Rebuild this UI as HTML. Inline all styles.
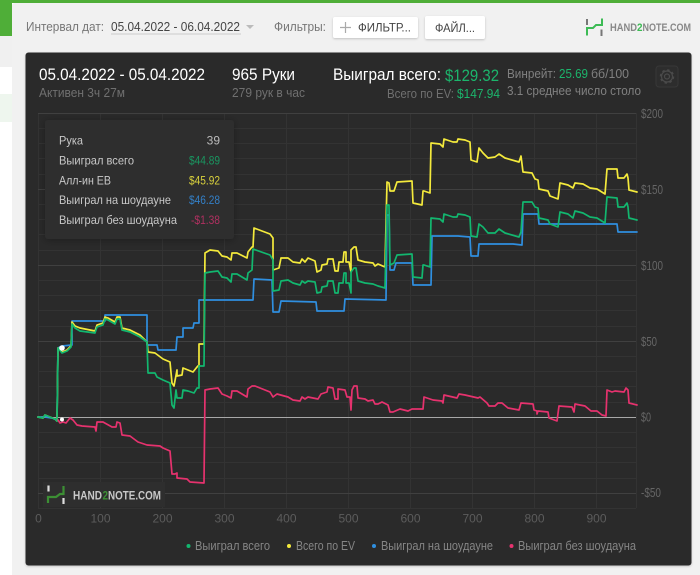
<!DOCTYPE html>
<html><head><meta charset="utf-8"><style>
html,body{margin:0;padding:0;width:700px;height:575px;overflow:hidden;background:#fff}
svg{display:block;font-family:"Liberation Sans","Noto Sans CJK SC",sans-serif}
</style></head><body>
<svg width="700" height="575" viewBox="0 0 700 575" xmlns="http://www.w3.org/2000/svg">
<defs>
<filter id="s" x="-20%" y="-20%" width="140%" height="140%"><feDropShadow dx="0" dy="1" stdDeviation="1" flood-color="#000" flood-opacity=".2"/></filter>
<filter id="t" x="-20%" y="-20%" width="140%" height="140%"><feDropShadow dx="0" dy="1" stdDeviation="4" flood-color="#000" flood-opacity=".3"/></filter>
</defs>
<rect width="700" height="575" fill="#fff"/>
<rect width="700" height="3" fill="#4fae38"/>
<rect width="12" height="36" fill="#4fae38"/>
<rect y="36" width="12" height="31" fill="#f0f0f0"/>
<rect y="94" width="12" height="28" fill="#eef6ee"/>
<rect x="12" y="3" width="700" height="580" rx="3" fill="#f1f1f1"/>

<text x="26" y="31" font-size="13" fill="#777" textLength="78" lengthAdjust="spacingAndGlyphs">Интервал дат:</text>
<text x="111" y="31" font-size="13" fill="#444" textLength="129" lengthAdjust="spacingAndGlyphs">05.04.2022 - 06.04.2022</text>
<rect x="111" y="33.500" width="130" height="1" fill="#ccc"/>
<path d="M246 25h8l-4 4z" fill="#bbb"/>
<text x="274" y="31" font-size="13" fill="#777" textLength="52" lengthAdjust="spacingAndGlyphs">Фильтры:</text>
<rect x="333" y="17" width="85" height="21" rx="2" fill="#fff" filter="url(#s)"/>
<path d="M345.500 22v11M340 27.500h11" stroke="#aaa" stroke-width="1.200" fill="none"/>
<text x="358" y="31.500" font-size="12" fill="#444" textLength="53" lengthAdjust="spacingAndGlyphs">ФИЛЬТР...</text>
<rect x="425" y="16" width="60" height="23" rx="2" fill="#fff" filter="url(#s)"/>
<text x="435" y="32" font-size="12" fill="#444" textLength="40" lengthAdjust="spacingAndGlyphs">ФАЙЛ...</text>

<path d="M587 19v6M601.500 29.500v6.500" stroke="#777" stroke-width="2" fill="none"/>
<path d="M587 35.500v-7.500h6l3-3h6v-6.500" stroke="#3dbb55" stroke-width="2" fill="none"/>
<g font-size="11" font-weight="bold" fill="#888">
<text x="610" y="31" textLength="27" lengthAdjust="spacingAndGlyphs">HAND</text>
<text x="637" y="31" fill="#3dbb55" textLength="5.500" lengthAdjust="spacingAndGlyphs">2</text>
<text x="642.500" y="31" textLength="48.500" lengthAdjust="spacingAndGlyphs">NOTE.COM</text>
</g>

<rect x="25.500" y="52.500" width="666" height="513" rx="3" fill="#2a2a2a" filter="url(#s)"/>

<text x="39" y="80" font-size="17" fill="#fff" textLength="166" lengthAdjust="spacingAndGlyphs">05.04.2022 - 05.04.2022</text>
<text x="39" y="97" font-size="13" fill="#707070" textLength="86" lengthAdjust="spacingAndGlyphs">Активен 3ч 27м</text>
<text x="232" y="80" font-size="17" fill="#fff" textLength="63" lengthAdjust="spacingAndGlyphs">965 Руки</text>
<text x="232" y="97" font-size="13" fill="#707070" textLength="73" lengthAdjust="spacingAndGlyphs">279 рук в час</text>
<text x="333" y="80" font-size="17" fill="#fff" textLength="108" lengthAdjust="spacingAndGlyphs">Выиграл всего:</text>
<text x="445" y="81" font-size="17" fill="#1cb56c" textLength="54" lengthAdjust="spacingAndGlyphs">$129.32</text>
<text x="387" y="98" font-size="13" fill="#707070" textLength="67" lengthAdjust="spacingAndGlyphs">Всего по EV:</text>
<text x="457" y="98" font-size="13" fill="#1cb56c" textLength="43" lengthAdjust="spacingAndGlyphs">$147.94</text>
<text x="507" y="78" font-size="13" fill="#808080" textLength="49" lengthAdjust="spacingAndGlyphs">Винрейт:</text>
<text x="559" y="78" font-size="13" fill="#1cb56c" textLength="29" lengthAdjust="spacingAndGlyphs">25.69</text>
<text x="591" y="78" font-size="13" fill="#808080" textLength="38" lengthAdjust="spacingAndGlyphs">бб/100</text>
<text x="507" y="95" font-size="13" fill="#808080" textLength="134" lengthAdjust="spacingAndGlyphs">3.1 среднее число столо</text>

<rect x="656" y="66" width="22" height="21" rx="3" fill="#2d2d2d" stroke="#383838"/>
<circle cx="667" cy="76.500" r="2.500" fill="none" stroke="#4a4a4a" stroke-width="1.200"/>
<circle cx="667" cy="76.500" r="5.500" fill="none" stroke="#4a4a4a" stroke-width="1.200"/>
<circle cx="667" cy="76.500" r="6.500" fill="none" stroke="#4a4a4a" stroke-width="1.500" stroke-dasharray="2.500 2.600"/>

<g stroke="#333" stroke-width="1" fill="none">
<path d="M38 128.500H636M38 143.500H636M38 158.500H636M38 174.500H636M38 204.500H636M38 219.500H636M38 234.500H636M38 250.500H636M38 280.500H636M38 295.500H636M38 310.500H636M38 326.500H636M38 356.500H636M38 371.500H636M38 386.500H636M38 402.500H636M38 432.500H636M38 447.500H636M38 462.500H636M38 478.500H636"/>
<path d="M38.500 113V508M100.500 113V508M162.500 113V508M224.500 113V508M286.500 113V508M348.500 113V508M410.500 113V508M472.500 113V508M534.500 113V508M596.500 113V508M636.500 113V508"/>
<path d="M38 113.500H636M38 189.500H636M38 265.500H636M38 341.500H636M38 493.500H636" stroke="#404040"/>
<path d="M38 508.500H636" stroke="#333"/>
</g>
<path d="M38 417.500H636" stroke="#a8a8a8" stroke-width="1"/>

<g font-size="13" fill="#666">
<text x="641" y="118" textLength="22" lengthAdjust="spacingAndGlyphs">$200</text>
<text x="641" y="194" textLength="22" lengthAdjust="spacingAndGlyphs">$150</text>
<text x="641" y="270" textLength="22" lengthAdjust="spacingAndGlyphs">$100</text>
<text x="641" y="346" textLength="16" lengthAdjust="spacingAndGlyphs">$50</text>
<text x="641" y="421.500" textLength="10" lengthAdjust="spacingAndGlyphs">$0</text>
<text x="641" y="497" textLength="20" lengthAdjust="spacingAndGlyphs">-$50</text>
</g>
<g font-size="12" fill="#5c5c5c" text-anchor="middle">
<text x="38.500" y="522.500">0</text><text x="100.500" y="522.500">100</text><text x="162.500" y="522.500">200</text><text x="224.500" y="522.500">300</text><text x="286.500" y="522.500">400</text><text x="348.500" y="522.500">500</text><text x="410.500" y="522.500">600</text><text x="472.500" y="522.500">700</text><text x="534.500" y="522.500">800</text><text x="596.500" y="522.500">900</text>
</g>

<g fill="none" stroke-width="1.700" stroke-linejoin="round" stroke-linecap="round">
<path stroke="#2f8fe0" d="M38 417L45 417L52 418L57 420L58 348L62 346L72 345L72 321L105 321L105 315L147 315L147 345L157 345L158 350L176 350L177 337L183 337L183 328L193 328L194 323L199 323L199 300L253 300L254 279L272 280L273 312L279 312L281 301L316 302L317 311L344 311L345 299L386 300L387 215L389 215L390 270L394 270L396 263L412 263L413 285L431 285L432 236L458 236L470 237L471 256L478 256L479 244L513 244L522 245L523 214L538 214L539 224L617 224L618 232L637 232"/>
<path stroke="#f4ea3c" d="M38 417L43 418L45 415L50 417L55 419L57 421L58 348L62 352L67 350L71 346L72 322L75 326L80 328L95 331L97 325L103 323L105 317L108 318L115 322L117 317L120 317L122 328L130 330L140 335L147 342L148 352L155 353L163 359L170 362L172 383L174 386L177 370L177 376L182 375L183 368L188 370L193 372L197 367L199 365L199 344L204 344L205 253L210 250L218 251L222 256L227 257L231 260L232 253L237 253L247 258L248 252L252 247L253 247L254 228L270 234L273 238L273 270L279 268L281 258L288 258L293 262L300 263L302 259L305 262L308 258L315 261L317 272L321 270L322 265L327 264L328 259L333 259L335 271L338 271L339 262L343 262L344 252L346 252L346 262L349 262L351 272L351 250L354 247L356 247L358 260L365 262L373 263L375 266L378 264L385 267L387 182L389 183L390 191L394 191L397 182L412 181L413 203L422 205L423 191L424 191L430 193L431 143L440 144L443 147L444 139L453 142L457 142L458 139L465 140L470 142L471 160L477 162L479 148L483 153L488 158L495 157L499 154L505 158L519 162L521 156L523 172L532 173L535 179L538 180L539 189L548 191L550 196L558 199L560 183L568 185L573 188L575 183L583 184L590 188L597 189L605 194L607 169L617 169L618 178L624 178L627 174L628 178L629 190L637 192"/>
<path stroke="#12b76f" d="M38 417L43 418L45 415L50 417L55 419L57 421L58 348L62 353L67 351L71 347L72 324L75 328L80 331L95 333L97 327L103 325L105 319L108 320L115 324L117 319L120 319L122 330L130 332L140 337L147 342L148 373L155 373L157 377L163 380L170 383L172 405L174 408L176 390L177 398L182 398L183 390L188 391L194 393L197 388L199 388L199 366L204 366L205 273L210 272L218 271L222 277L227 278L231 282L232 274L237 274L247 280L248 273L252 270L253 249L270 255L273 260L273 291L279 290L281 281L288 280L293 283L300 285L302 281L305 283L308 281L315 282L317 293L321 292L322 287L327 286L328 281L333 281L335 293L338 293L339 283L343 283L344 273L346 273L346 283L349 283L351 293L351 272L354 268L356 268L358 281L365 283L373 284L378 286L385 288L387 205L389 205L390 265L394 263L397 255L412 254L413 277L422 278L423 265L424 265L430 267L431 218L440 219L443 222L444 214L453 217L457 217L458 214L465 215L470 217L471 236L477 237L479 224L483 227L488 233L495 233L499 229L505 233L519 237L521 232L523 202L532 202L535 207L538 208L539 218L548 220L550 224L558 227L560 212L568 214L573 218L575 211L583 213L590 217L597 218L605 223L607 197L617 198L618 207L624 207L627 203L628 207L629 218L637 220"/>
<path stroke="#e6326e" d="M58 420L60 423L63 422L66 423L70 418L73 420L77 425L82 426L95 427L96 431L97 422L103 422L112 427L116 427L117 422L120 423L122 435L130 436L138 442L147 445L160 446L163 448L170 451L172 474L175 474L177 473L177 478L187 479L190 482L204 483L205 390L210 389L218 388L222 394L227 396L231 398L232 391L237 391L247 397L248 389L252 386L255 386L270 392L273 397L277 394L288 397L293 400L300 401L302 397L305 399L308 397L318 399L321 394L327 392L328 387L333 388L335 399L338 399L338 389L345 390L347 397L350 397L351 410L352 390L354 386L357 386L358 398L365 399L368 401L373 400L375 404L378 404L382 402L388 405L390 412L393 412L400 409L408 411L412 409L423 409L424 397L433 400L442 401L443 403L444 395L457 398L459 394L465 395L478 398L480 397L487 403L489 406L495 406L498 403L502 403L508 408L519 410L521 403L533 404L534 410L537 411L537 414L538 411L548 412L549 418L557 421L559 406L572 407L574 412L575 404L585 406L591 411L597 411L602 415L606 416L607 390L612 392L615 391L624 392L626 388L628 390L629 403L637 405"/>
</g>
<circle cx="62" cy="348" r="2.800" fill="#fff"/>
<circle cx="62" cy="419.500" r="2" fill="#fff"/>

<rect x="45" y="120" width="189" height="119" rx="3" fill="#2f2f2f" filter="url(#t)"/>
<g font-size="12" fill="#c8c8c8">
<text x="59" y="144.500" textLength="24" lengthAdjust="spacingAndGlyphs">Рука</text>
<text x="59" y="164.500" textLength="75" lengthAdjust="spacingAndGlyphs">Выиграл всего</text>
<text x="59" y="184.500" textLength="52" lengthAdjust="spacingAndGlyphs">Алл-ин ЕВ</text>
<text x="59" y="204" textLength="112" lengthAdjust="spacingAndGlyphs">Выиграл на шоудауне</text>
<text x="59" y="224" textLength="118" lengthAdjust="spacingAndGlyphs">Выиграл без шоудауна</text>
</g>
<g font-size="12" text-anchor="end">
<text x="220" y="144.500" fill="#bbb">39</text>
<text x="220" y="164.500" fill="#1a9560" textLength="31" lengthAdjust="spacingAndGlyphs">$44.89</text>
<text x="220" y="184.500" fill="#d8d03c" textLength="31" lengthAdjust="spacingAndGlyphs">$45.92</text>
<text x="220" y="204" fill="#337fc6" textLength="31" lengthAdjust="spacingAndGlyphs">$46.28</text>
<text x="220" y="224" fill="#b03060" textLength="29" lengthAdjust="spacingAndGlyphs">-$1.38</text>
</g>

<rect x="43" y="482" width="122" height="25" fill="#2e2e2e"/>
<path d="M48.500 485.500v6M63.500 498v6" stroke="#ddd" stroke-width="2.200" fill="none"/>
<path d="M48 503v-6h8l4-3h3.500v-8" stroke="#3c8f34" stroke-width="2.200" fill="none"/>
<g font-size="12" font-weight="bold" fill="#c8c8c8">
<text x="73" y="499.500" textLength="29" lengthAdjust="spacingAndGlyphs">HAND</text>
<text x="102.500" y="499.500" fill="#3c8f34" textLength="5.500" lengthAdjust="spacingAndGlyphs">2</text>
<text x="108" y="499.500" textLength="53" lengthAdjust="spacingAndGlyphs">NOTE.COM</text>
</g>

<circle cx="188.500" cy="546" r="2" fill="#12b76f"/>
<text x="195" y="550" font-size="12.500" fill="#858585" textLength="75" lengthAdjust="spacingAndGlyphs">Выиграл всего</text>
<circle cx="289" cy="546" r="2" fill="#f4ea3c"/>
<text x="296" y="550" font-size="12.500" fill="#858585" textLength="59" lengthAdjust="spacingAndGlyphs">Всего по EV</text>
<circle cx="374" cy="546" r="2" fill="#2f8fe0"/>
<text x="381" y="550" font-size="12.500" fill="#858585" textLength="112" lengthAdjust="spacingAndGlyphs">Выиграл на шоудауне</text>
<circle cx="511.500" cy="546" r="2" fill="#e6326e"/>
<text x="518" y="550" font-size="12.500" fill="#858585" textLength="118" lengthAdjust="spacingAndGlyphs">Выиграл без шоудауна</text>
</svg>
</body></html>
